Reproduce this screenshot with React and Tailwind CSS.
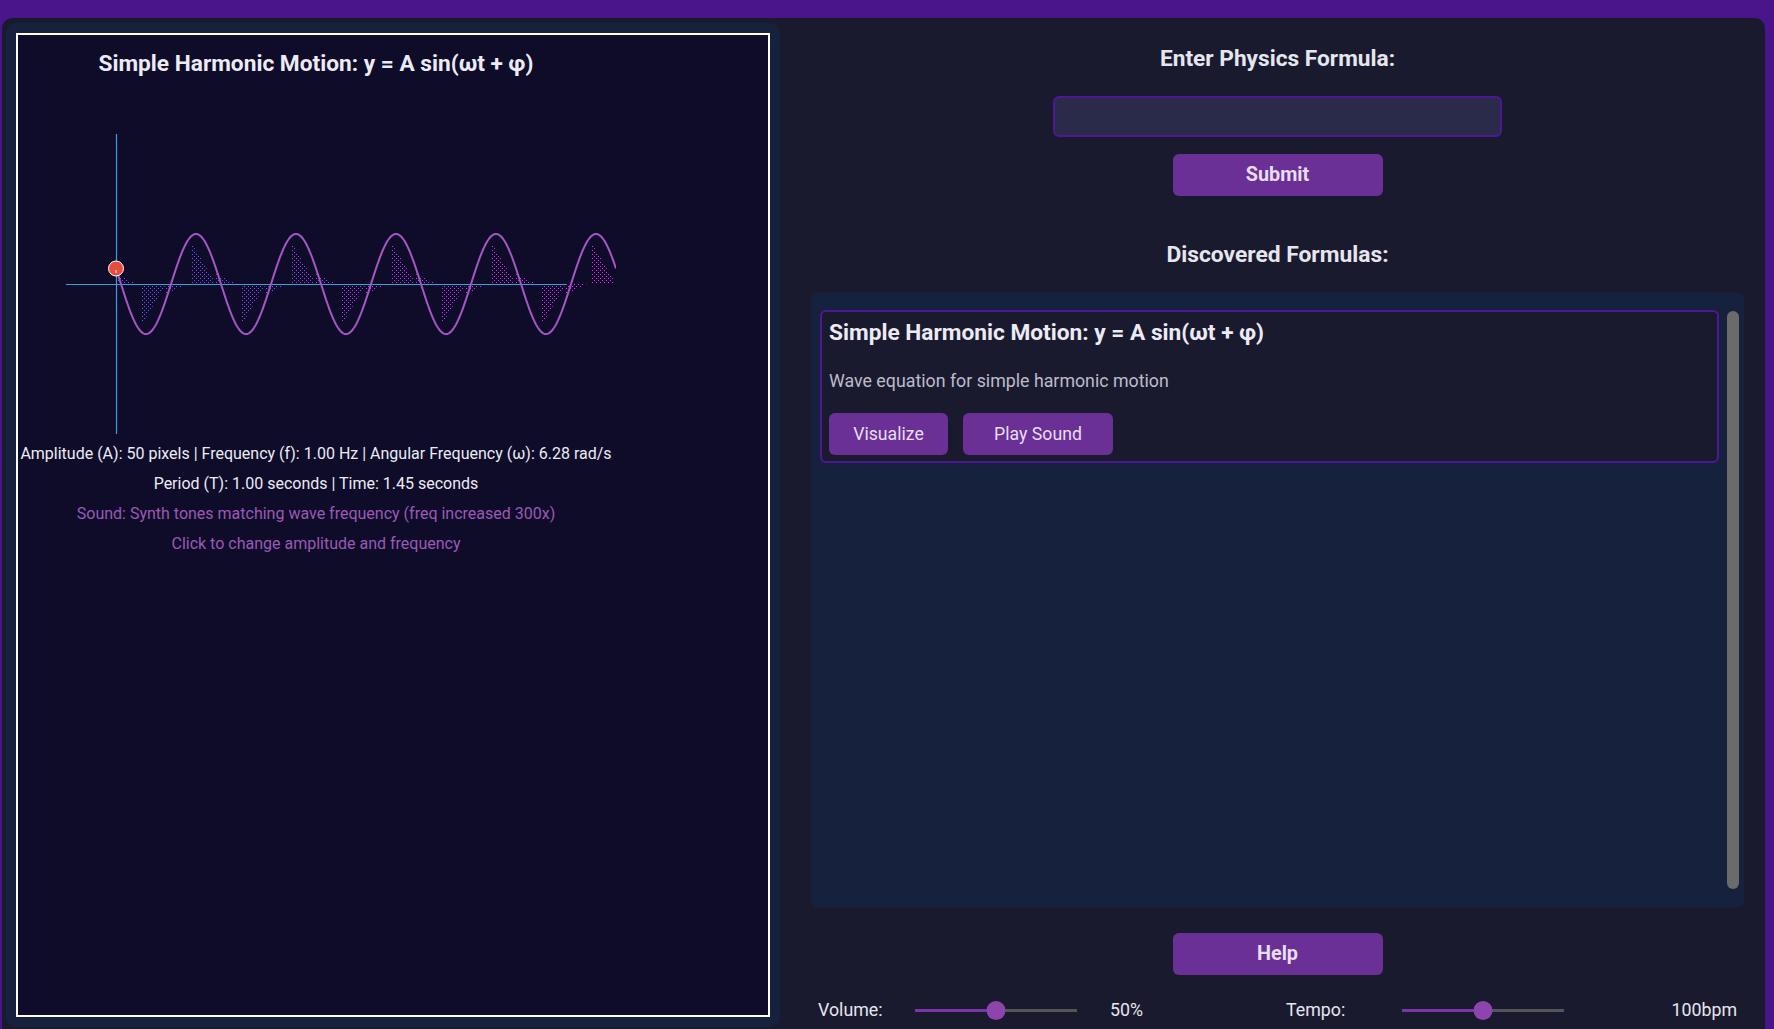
import React from 'react';

// canvas drawing constants (svg units = px)
const AXIS_X = 100;
const MID_Y = 206;
const AMP = 50;
const PERIOD = 100;

function wavePath() {
  const pts = [];
  for (let d = 0; d <= 500; d += 1) {
    const y = MID_Y - AMP * Math.cos((2 * Math.PI * (d - 80)) / PERIOD);
    pts.push(`${(AXIS_X + d).toFixed(1)},${y.toFixed(2)}`);
  }
  return 'M' + pts.join(' L');
}

// sawtooth dotted blocks: a tall triangle followed by a small tail
function blockHeight(t) {
  if (t < 0) return 0;
  if (t < 25) return 42 * (1 - t / 25);
  if (t <= 46) return 10 * (1 - (t - 25) / 21);
  return 0;
}

function fillPath() {
  let out = '';
  for (let k = -1; k <= 9; k++) {
    const s = 25 + 50 * k;
    const sign = k % 2 === 0 ? 1 : -1;
    const pts = [];
    for (let t = 0; t <= 46; t += 0.5) {
      const d = s + t;
      if (d < 0 || d > 500) continue;
      // make the step at t=25 sharp
      const h = t === 25 ? 0 : blockHeight(t);
      pts.push([AXIS_X + d, MID_Y + sign * h]);
      if (t === 25) pts.push([AXIS_X + d, MID_Y + sign * 10]);
    }
    if (!pts.length) continue;
    out +=
      `M${pts[0][0]},${MID_Y} ` +
      pts.map((p) => `L${p[0]},${p[1].toFixed(2)}`).join(' ') +
      ` L${pts[pts.length - 1][0]},${MID_Y} Z `;
  }
  return out;
}

const WAVE = wavePath();
const FILL = fillPath();

function WaveCanvas() {
  return (
    <svg width="600" height="361" viewBox="0 -1 600 361" className="block">
      <defs>
        <linearGradient id="dotGrad" gradientUnits="userSpaceOnUse" x1="100" y1="0" x2="600" y2="0">
          <stop offset="0" stopColor="#5a5aff" />
          <stop offset="0.5" stopColor="#b040ff" />
          <stop offset="1" stopColor="#ff20ff" />
        </linearGradient>
        <pattern id="dotPat" width="4" height="4" patternUnits="userSpaceOnUse">
          <rect x="0" y="0" width="1" height="1" fill="white" />
          <rect x="2" y="2" width="1" height="1" fill="white" />
        </pattern>
        <mask id="dotMask">
          <rect y="-1" width="600" height="361" fill="url(#dotPat)" />
        </mask>
      </defs>
      <g mask="url(#dotMask)">
        <path d={FILL} fill="url(#dotGrad)" />
      </g>
      <line x1="50" y1={MID_Y + 0.5} x2="550" y2={MID_Y + 0.5} stroke="#3a9ee0" strokeWidth="1.2" />
      <line x1={AXIS_X + 0.5} y1="56" x2={AXIS_X + 0.5} y2="356" stroke="#3a9ee0" strokeWidth="1.2" />
      <path d={WAVE} fill="none" stroke="#a455c4" strokeWidth="2" />
      <circle cx={AXIS_X} cy="190.5" r="7.5" fill="#e74c3c" stroke="#ffffff" strokeWidth="1" />
      <line x1={AXIS_X} y1="192" x2={AXIS_X} y2="195" stroke="#ffffff" strokeWidth="1" />
    </svg>
  );
}

function Slider() {
  return (
    <div className="relative flex items-center w-[162px] h-[20px]">
      <div className="w-1/2 h-[3px] bg-[#7a35a8]" />
      <div className="w-1/2 h-[3px] bg-[#555558]" />
      <div className="absolute left-1/2 top-[1px] -translate-x-1/2 w-[19px] h-[19px] rounded-full bg-[#8e44ad]" />
    </div>
  );
}

export default function App() {
  return (
    <div
      className="h-[1029px] w-full overflow-hidden bg-[#4a158b] pt-[18px] pl-[2px] pr-[9px]"
      style={{ fontFamily: 'Roboto, "Noto Sans", sans-serif' }}
    >
      <div className="h-full bg-[#1a1a2e] rounded-t-[10px] flex">
        {/* Left: simulation canvas */}
        <div className="w-[774px] h-[1004px] mt-[5px] ml-[4px] rounded-[10px] bg-[#16213e] p-[10px]">
          <div className="w-full h-full border-2 border-white bg-[#0e0c29]">
            <div className="w-[600px] ml-[-2px] flex flex-col items-center">
              <div className="pt-[15px] h-[42px] leading-[28px] text-[22.7px] font-bold text-[#ecebf5] whitespace-nowrap">
                Simple Harmonic Motion: y = A sin(ωt + φ)
              </div>
              <WaveCanvas />
              <div className="h-[30px] leading-[30px] pt-[1px] text-[16px] text-[#ecebf5] whitespace-nowrap">
                Amplitude (A): 50 pixels | Frequency (f): 1.00 Hz | Angular Frequency (ω): 6.28 rad/s
              </div>
              <div className="h-[30px] leading-[30px] pt-[1px] text-[16px] text-[#ecebf5] whitespace-nowrap">
                Period (T): 1.00 seconds | Time: 1.45 seconds
              </div>
              <div className="h-[30px] leading-[30px] pt-[1px] text-[16px] text-[#9b59b6] whitespace-nowrap">
                Sound: Synth tones matching wave frequency (freq increased 300x)
              </div>
              <div className="h-[30px] leading-[30px] pt-[1px] text-[16px] text-[#9b59b6] whitespace-nowrap">
                Click to change amplitude and frequency
              </div>
            </div>
          </div>
        </div>

        {/* Right: formula input + list */}
        <div className="flex-1 ml-[10px] px-[21px] flex flex-col items-center">
          <h2 className="mt-[27px] h-[28px] leading-[28px] text-[22.7px] font-bold text-[#e6e6ee]">
            Enter Physics Formula:
          </h2>
          <input
            type="text"
            className="mt-[23px] w-[449px] h-[41px] rounded-[6px] border-2 border-[#4e1796] bg-[#2a2a4a] px-3 text-[#e6e6ee] outline-none"
          />
          <button className="mt-[17px] w-[210px] h-[42px] rounded-[6px] bg-[#6b3096] text-[19.8px] font-bold text-[#e6def2]">
            Submit
          </button>
          <h2 className="mt-[45px] h-[28px] leading-[28px] text-[22.8px] font-bold text-[#e6e6ee]">
            Discovered Formulas:
          </h2>

          <div className="mt-[23px] w-full h-[616px] rounded-[8px] bg-[#16213e] flex py-[18px] pl-[9px] pr-[5px]">
            <div className="flex-1">
              <div className="rounded-[6px] border-2 border-[#4e1796] bg-[#1a1a2e] pt-[8px] pb-[6px] px-[7px]">
                <div className="h-[26px] leading-[26px] text-[22.7px] font-bold text-[#ecebf5]">
                  Simple Harmonic Motion: y = A sin(ωt + φ)
                </div>
                <div className="mt-[24px] h-[22px] leading-[22px] text-[17.8px] text-[#bdbccb]">
                  Wave equation for simple harmonic motion
                </div>
                <div className="mt-[21px] flex gap-[15px]">
                  <button className="w-[119px] h-[42px] rounded-[6px] bg-[#6b3096] text-[17.7px] text-[#e6def2]">
                    Visualize
                  </button>
                  <button className="w-[150px] h-[42px] rounded-[6px] bg-[#6b3096] text-[17.7px] text-[#e6def2]">
                    Play Sound
                  </button>
                </div>
              </div>
            </div>
            <div className="ml-[8px] my-[1px] w-[12px] rounded-full bg-[#6b6b6b]" />
          </div>

          <button className="mt-[25px] w-[210px] h-[42px] rounded-[6px] bg-[#6b3096] text-[19.8px] font-bold text-[#e6def2]">
            Help
          </button>

          <div className="mt-[21px] w-full h-[28px] px-[7px] flex items-center text-[17.8px] text-[#e6e6ee]">
            <span className="w-[97px]">Volume:</span>
            <Slider />
            <span className="ml-[33px] w-[176px]">50%</span>
            <span className="w-[116px]">Tempo:</span>
            <Slider />
            <span className="flex-1 text-right">100bpm</span>
          </div>
        </div>
      </div>
    </div>
  );
}
